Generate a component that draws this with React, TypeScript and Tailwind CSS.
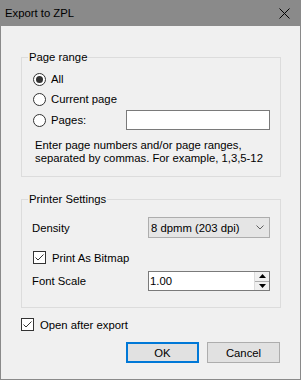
import { useState } from "react";

const font = { fontFamily: '"Liberation Sans", Arial, sans-serif' };

function Radio({ checked, label, onClick }: { checked: boolean; label: string; onClick: () => void }) {
  return (
    <button onClick={onClick} className="flex items-center gap-[5px] h-[20px] text-left">
      <span className="w-[13px] h-[13px] rounded-full border border-[#333333] bg-white flex items-center justify-center">
        {checked && <span className="w-[7px] h-[7px] rounded-full bg-[#333333]" />}
      </span>
      <span>{label}</span>
    </button>
  );
}

function Checkbox({ checked, label, onClick }: { checked: boolean; label: string; onClick: () => void }) {
  return (
    <button onClick={onClick} className="flex items-center gap-[6px] h-[13px]">
      <span className="w-[13px] h-[13px] border border-[#333333] bg-white flex items-center justify-center">
        {checked && (
          <svg width="11" height="11" viewBox="0 0 11 11">
            <path d="M1.5 5.5 L4 8 L9.5 2.5" fill="none" stroke="#333333" strokeWidth="1" />
          </svg>
        )}
      </span>
      <span>{label}</span>
    </button>
  );
}

function Group({ title, children, className }: { title: string; children: React.ReactNode; className?: string }) {
  return (
    <div className={`relative border border-[#dcdcdc] ${className ?? ""}`}>
      <span className="absolute -top-[9px] left-[6px] px-[1px] bg-[#f0f0f0] leading-[16px]">{title}</span>
      {children}
    </div>
  );
}

export default function App() {
  const [range, setRange] = useState("all");
  const [bitmap, setBitmap] = useState(true);
  const [openAfter, setOpenAfter] = useState(true);

  return (
    <div
      className="w-[301px] h-[380px] bg-[#8a8a8a] flex flex-col px-[1px] pb-[1px] text-[11.3px] text-black leading-[16px] whitespace-nowrap"
      style={font}
    >
      <div className="h-[26px] flex items-center justify-between pl-[4px] pr-[10px] shrink-0">
        <span>Export to ZPL</span>
        <svg width="11" height="11" viewBox="0 0 11 11">
          <path d="M0.5 0.5 L10.5 10.5 M10.5 0.5 L0.5 10.5" stroke="#000" strokeWidth="1" />
        </svg>
      </div>

      <div className="flex-1 bg-[#f0f0f0] flex flex-col pl-[20px] pr-[19px] pt-[31px]">
        <Group title="Page range">
          <div className="flex flex-col pl-[11px] pr-[10px] pt-[11px] pb-[11px]">
            <Radio checked={range === "all"} label="All" onClick={() => setRange("all")} />
            <Radio checked={range === "current"} label="Current page" onClick={() => setRange("current")} />
            <div className="flex items-center justify-between h-[20px] mt-[1px]">
              <Radio checked={range === "pages"} label="Pages:" onClick={() => setRange("pages")} />
              <input className="w-[144px] h-[20px] border border-[#7a7a7a] bg-white outline-none px-[3px]" />
            </div>
            <p className="mt-[9px] pl-[2px] leading-[13px]">
              Enter page numbers and/or page ranges,
              <br />
              separated by commas. For example, 1,3,5-12
            </p>
          </div>
        </Group>

        <Group title="Printer Settings" className="mt-[22px]">
          <div className="flex flex-col pl-[10px] pr-[10px] pt-[17px] pb-[16px]">
            <div className="flex items-center justify-between h-[21px]">
              <span>Density</span>
              <div className="w-[122px] h-[21px] border border-[#adadad] bg-[#e5e5e5] flex items-center justify-between pl-[2px] pr-[5px]">
                <span>8 dpmm (203 dpi)</span>
                <svg width="8" height="5" viewBox="0 0 8 5">
                  <path d="M0.5 0.5 L4 4 L7.5 0.5" fill="none" stroke="#606060" strokeWidth="1" />
                </svg>
              </div>
            </div>
            <div className="mt-[13px] ml-[1px]">
              <Checkbox checked={bitmap} label="Print As Bitmap" onClick={() => setBitmap(!bitmap)} />
            </div>
            <div className="flex items-center justify-between h-[20px] mt-[7px]">
              <span>Font Scale</span>
              <div className="w-[122px] h-[20px] border border-[#7a7a7a] bg-white flex">
                <span className="flex-1 pl-[1px] leading-[18px]">1.00</span>
                <div className="w-[15px] flex flex-col border-l border-[#dcdcdc] bg-[#f0f0f0]">
                  <div className="flex-1 flex items-center justify-center border-b border-[#adadad]">
                    <svg width="7" height="4" viewBox="0 0 7 4">
                      <path d="M0 4 L3.5 0 L7 4 Z" fill="#000" />
                    </svg>
                  </div>
                  <div className="flex-1 flex items-center justify-center">
                    <svg width="7" height="4" viewBox="0 0 7 4">
                      <path d="M0 0 L3.5 4 L7 0 Z" fill="#000" />
                    </svg>
                  </div>
                </div>
              </div>
            </div>
          </div>
        </Group>

        <div className="mt-[10px]">
          <Checkbox checked={openAfter} label="Open after export" onClick={() => setOpenAfter(!openAfter)} />
        </div>

        <div className="mt-[11px] flex justify-end gap-[8px] mr-[1px]">
          <button className="w-[73px] h-[21px] border-2 border-[#0078d7] bg-[#e1e1e1]">OK</button>
          <button className="w-[73px] h-[21px] border border-[#adadad] bg-[#e1e1e1]">Cancel</button>
        </div>
      </div>
    </div>
  );
}
